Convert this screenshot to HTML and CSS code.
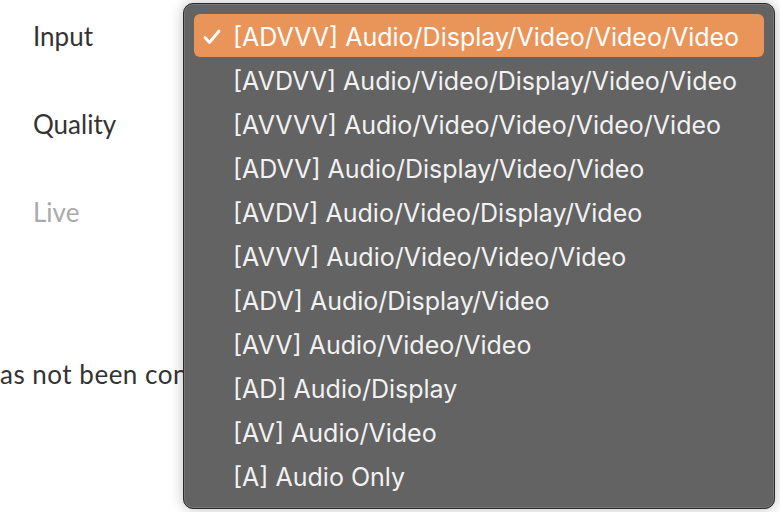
FILE: index.html
```html
<!DOCTYPE html>
<html lang="en">
<head>
    <meta charset="UTF-8">
    <meta name="viewport" content="width=device-width, initial-scale=1.0">
    <title>Stream Settings</title>
    <link rel="stylesheet" href="styles.css">
</head>
<body>
    <div class="settings">
        <div class="row">Input</div>
        <div class="row">Quality</div>
        <div class="row muted">Live</div>
        <p class="status">has not been connected</p>
    </div>

    <ul class="menu">
        <li class="item selected">
            <svg class="check" width="18" height="16" viewBox="0 0 18 16"><polyline points="2,8.5 6.5,13.5 16,2" fill="none" stroke="#fff" stroke-width="2.8" stroke-linecap="round" stroke-linejoin="round"/></svg>
            [ADVVV] Audio/Display/Video/Video/Video
        </li>
        <li class="item">[AVDVV] Audio/Video/Display/Video/Video</li>
        <li class="item">[AVVVV] Audio/Video/Video/Video/Video</li>
        <li class="item">[ADVV] Audio/Display/Video/Video</li>
        <li class="item">[AVDV] Audio/Video/Display/Video</li>
        <li class="item">[AVVV] Audio/Video/Video/Video</li>
        <li class="item">[ADV] Audio/Display/Video</li>
        <li class="item">[AVV] Audio/Video/Video</li>
        <li class="item">[AD] Audio/Display</li>
        <li class="item">[AV] Audio/Video</li>
        <li class="item">[A] Audio Only</li>
    </ul>
</body>
</html>
```

FILE: styles.css
```css
body { margin: 0; background: #fff; font-family: Lato, "Open Sans", sans-serif; overflow: hidden; }
.settings { padding: 17px 0 0 33px; color: #333; }
.row { height: 88px; font-size: 26px; line-height: 38px; }
.row.muted { color: #aaa; }
.status { margin: 74px 0 0 -48px; font-size: 26px; line-height: 38px; letter-spacing: 0.5px; color: #333; white-space: nowrap; }

.menu {
    position: absolute; left: 183px; top: 3px; width: 592px; height: 506px;
    margin: 0; padding: 10px 10px 0 10px; box-sizing: border-box; list-style: none;
    background: #636363; border: 1px solid #2a2a2a; border-radius: 10px;
    box-shadow: inset 0 0 0 1px #777, 0 0 14px rgba(0, 0, 0, 0.25);
    font-family: Inter, "Noto Sans", sans-serif; color: #f2f2f2;
}
.item { position: relative; height: 44px; line-height: 47px; padding-left: 39px; font-size: 25px; white-space: nowrap; }
.item.selected { background: #e9955a; color: #fff; border-radius: 6px; height: 43px; margin-bottom: 1px; }
.check { position: absolute; left: 9px; top: 15px; }
```
